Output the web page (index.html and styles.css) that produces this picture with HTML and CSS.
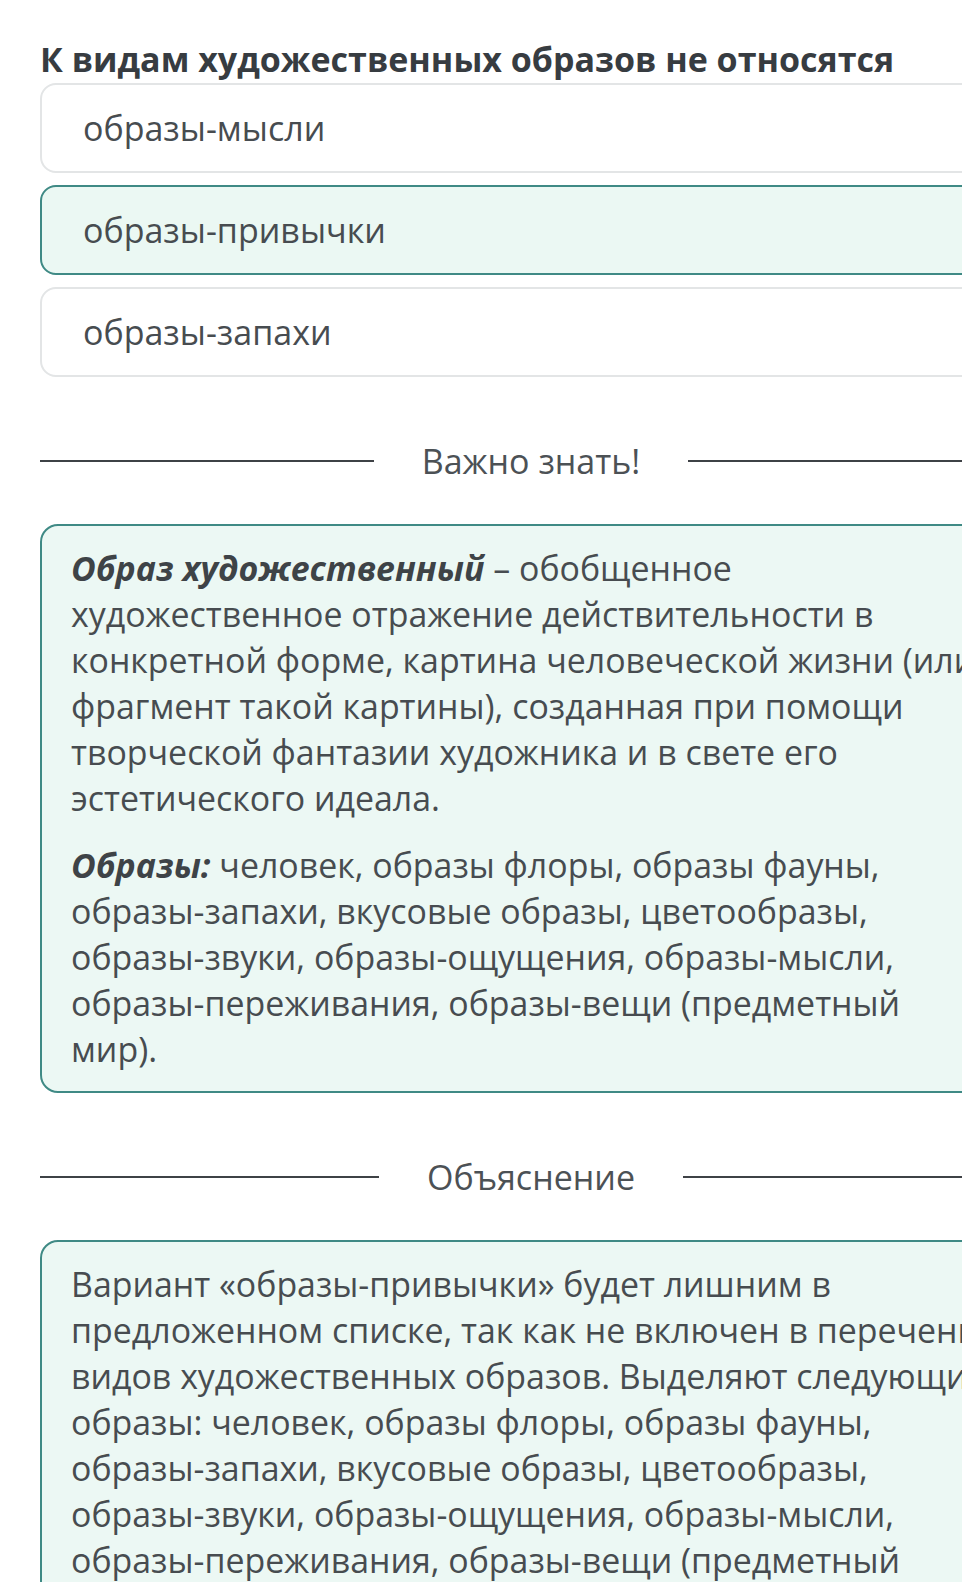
FILE: index.html
```html
<!DOCTYPE html>
<html lang="ru">
<head>
<meta charset="utf-8">
<link rel="stylesheet" href="styles.css">
</head>
<body>
<main class="page">
  <h1 class="question">К видам художественных образов не относятся</h1>
  <div class="options">
    <div class="option">образы-мысли</div>
    <div class="option option-selected">образы-привычки</div>
    <div class="option">образы-запахи</div>
  </div>

  <div class="divider"><span class="divider-line"></span><span class="divider-text">Важно знать!</span><span class="divider-line"></span></div>

  <div class="note">
    <p><b><i>Образ художественный</i></b> – обобщенное художественное отражение действительности в конкретной форме, картина человеческой жизни (или фрагмент такой картины), созданная при помощи творческой фантазии художника и в свете его эстетического идеала.</p>
    <p><b><i>Образы:</i></b> человек, образы флоры, образы фауны, образы-запахи, вкусовые образы, цветообразы, образы-звуки, образы-ощущения, образы-мысли, образы-переживания, образы-вещи (предметный мир).</p>
  </div>

  <div class="divider"><span class="divider-line"></span><span class="divider-text">Объяснение</span><span class="divider-line"></span></div>

  <div class="note">
    <p>Вариант «образы-привычки» будет лишним в предложенном списке, так как не включен в перечень видов художественных образов. Выделяют следующие образы: человек, образы флоры, образы фауны, образы-запахи, вкусовые образы, цветообразы, образы-звуки, образы-ощущения, образы-мысли, образы-переживания, образы-вещи (предметный мир).</p>
  </div>
</main>
</body>
</html>
```

FILE: styles.css
```css
html, body {
  margin: 0;
  padding: 0;
  overflow: hidden;
  background: #ffffff;
}

body {
  font-family: "Open Sans", "Noto Sans", sans-serif;
  color: #474c50;
}

.page {
  width: 982px;
  padding: 39px 0 0 40px;
}

.question {
  margin: 0 0 4px;
  font-size: 34px;
  line-height: 40px;
  font-weight: 700;
  color: #373c41;
}

.options {
  display: flex;
  flex-direction: column;
  gap: 12px;
}

.option {
  height: 86px;
  box-sizing: content-box;
  display: flex;
  align-items: center;
  padding: 0 41px;
  border: 2px solid #e3e5e6;
  border-radius: 16px;
  font-size: 34px;
  background: #ffffff;
}

.option-selected {
  background: #ebf8f3;
  border-color: #3f8a85;
}

.divider {
  display: flex;
  align-items: center;
  gap: 48px;
  margin: 61px 0 40px;
  height: 46px;
}

.divider-line {
  flex: 1;
  height: 2px;
  background: #3e4246;
}

.divider-text {
  font-size: 34px;
  line-height: 46px;
  color: #4c5155;
}

.note {
  background: #ecf8f4;
  border: 2px solid #3f8a85;
  border-radius: 18px;
  padding: 19px 33px 19px 29px;
  font-size: 33.9px;
  line-height: 46px;
}

.note p {
  margin: 0;
}

.note p + p {
  margin-top: 21px;
}

.note b {
  color: #3e4347;
}
```
